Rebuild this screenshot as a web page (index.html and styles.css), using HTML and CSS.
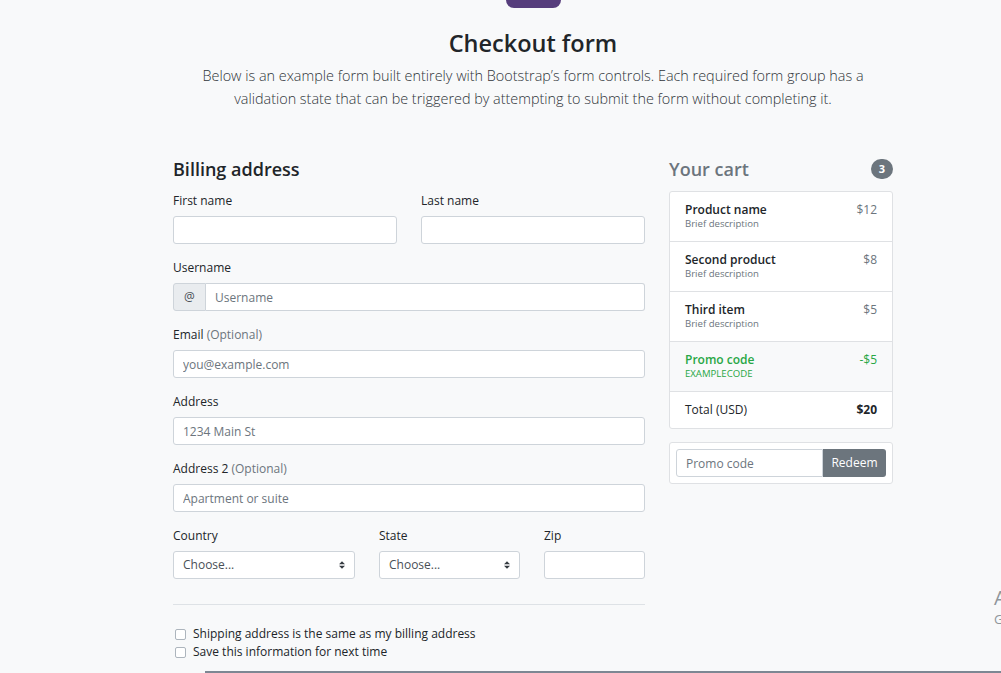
FILE: index.html
```html
<!DOCTYPE html>
<html lang="en">
<head>
<meta charset="utf-8">
<title>Checkout form</title>
<link rel="stylesheet" href="styles.css">
</head>
<body>
<div class="container">
  <header class="intro">
    <div class="logo"></div>
    <h2 class="title">Checkout form</h2>
    <p class="lead">Below is an example form built entirely with Bootstrap’s form controls. Each required form group has a validation state that can be triggered by attempting to submit the form without completing it.</p>
  </header>

  <div class="row">
    <main class="col-form">
      <h4 class="section-title">Billing address</h4>
      <div class="grid-2">
        <div class="group">
          <label class="label">First name</label>
          <input class="control" type="text">
        </div>
        <div class="group">
          <label class="label">Last name</label>
          <input class="control" type="text">
        </div>
      </div>
      <div class="group">
        <label class="label">Username</label>
        <div class="input-group">
          <span class="addon">@</span>
          <input class="control control-join" type="text" placeholder="Username">
        </div>
      </div>
      <div class="group">
        <label class="label">Email <span class="muted">(Optional)</span></label>
        <input class="control" type="text" placeholder="you@example.com">
      </div>
      <div class="group">
        <label class="label">Address</label>
        <input class="control" type="text" placeholder="1234 Main St">
      </div>
      <div class="group">
        <label class="label">Address 2 <span class="muted">(Optional)</span></label>
        <input class="control" type="text" placeholder="Apartment or suite">
      </div>
      <div class="grid-3">
        <div class="group">
          <label class="label">Country</label>
          <div class="select-wrap">
            <select class="control select"><option>Choose...</option></select>
            <svg class="arrows" width="6" height="8" viewBox="0 0 4 5"><path d="M2 0L0 2h4zm0 5L0 3h4z" fill="#343a40"/></svg>
          </div>
        </div>
        <div class="group">
          <label class="label">State</label>
          <div class="select-wrap">
            <select class="control select"><option>Choose...</option></select>
            <svg class="arrows" width="6" height="8" viewBox="0 0 4 5"><path d="M2 0L0 2h4zm0 5L0 3h4z" fill="#343a40"/></svg>
          </div>
        </div>
        <div class="group">
          <label class="label">Zip</label>
          <input class="control" type="text">
        </div>
      </div>
      <hr class="divider">
      <div class="check"><span class="box"></span><span>Shipping address is the same as my billing address</span></div>
      <div class="check"><span class="box"></span><span>Save this information for next time</span></div>
    </main>

    <aside class="col-cart">
      <h4 class="cart-title"><span class="muted">Your cart</span><span class="badge">3</span></h4>
      <ul class="list">
        <li class="item">
          <div><h6 class="item-name">Product name</h6><small class="item-desc">Brief description</small></div>
          <span class="price">$12</span>
        </li>
        <li class="item">
          <div><h6 class="item-name">Second product</h6><small class="item-desc">Brief description</small></div>
          <span class="price">$8</span>
        </li>
        <li class="item">
          <div><h6 class="item-name">Third item</h6><small class="item-desc">Brief description</small></div>
          <span class="price">$5</span>
        </li>
        <li class="item item-promo">
          <div><h6 class="item-name">Promo code</h6><small class="item-desc">EXAMPLECODE</small></div>
          <span class="price">-$5</span>
        </li>
        <li class="item item-total">
          <span>Total (USD)</span>
          <strong>$20</strong>
        </li>
      </ul>
      <div class="promo-card">
        <input class="control control-left" type="text" placeholder="Promo code">
        <button class="btn" type="button">Redeem</button>
      </div>
    </aside>
  </div>
</div>
<div class="watermark"><div class="wm1">Activate Windows</div><div class="wm2">Go to Settings to activate Windows.</div></div>
<div class="taskbar-edge"></div>
</body>
</html>
```

FILE: styles.css
```css
* { box-sizing: border-box; }
html, body { margin: 0; padding: 0; }
body {
  background: #f8f9fa;
  color: #212529;
  font-family: "Open Sans", "Noto Sans", sans-serif;
  font-size: 12px;
  line-height: 1.5;
  width: 1001px;
  height: 673px;
  overflow: hidden;
  position: relative;
}
.container { width: 744px; margin-left: 161px; }
.intro { text-align: center; display: flex; flex-direction: column; align-items: center; }
.logo { width: 55px; height: 8px; background: #563d7c; border-radius: 0 0 8px 8px; margin-left: 1px; }
.title { margin: 21px 0 6px; font-size: 23.5px; line-height: 29px; font-weight: 600; }
.lead { margin: 0; font-size: 14.4px; line-height: 23px; font-weight: 300; color: #2f3439; width: 680px; }

.row { display: flex; gap: 24px; margin-top: 48px; padding: 0 12px; }
.col-form { width: 472px; }
.col-cart { width: 224px; }

.section-title, .cart-title { margin: 0 0 10px; font-size: 18px; line-height: 22px; font-weight: 600; }
.cart-title { display: flex; justify-content: space-between; align-items: center; margin-bottom: 11px; }
.muted { color: #6c757d; font-weight: inherit; }
.badge { flex-shrink: 0; background: #6c757d; color: #fff; font-size: 11px; line-height: 20px; font-weight: 700; width: 22px; height: 20px; border-radius: 10px; text-align: center; }

.grid-2 { display: grid; grid-template-columns: 1fr 1fr; column-gap: 24px; }
.grid-3 { display: grid; grid-template-columns: 182px 141px 1fr; column-gap: 24px; }
.group { margin-bottom: 13px; }
.label { display: block; line-height: 22px; margin-bottom: 4px; }

.control {
  display: block; width: 100%; height: 28px;
  border: 1px solid #ced4da; border-radius: 3px; background: #fff;
  padding: 0 9px; font: inherit; font-size: 12px; color: #495057; outline: none;
}
.control::placeholder { color: #6c757d; }
.input-group { display: flex; }
.addon { flex-shrink: 0; width: 33px; height: 28px; background: #e9ecef; border: 1px solid #ced4da; border-radius: 3px 0 0 3px; display: flex; align-items: center; justify-content: center; color: #495057; }
.control-join { border-left: 0; border-radius: 0 3px 3px 0; flex: 1; width: 0; min-width: 0; }
.select-wrap { position: relative; }
.select { appearance: none; -webkit-appearance: none; color: #495057; }
.arrows { position: absolute; right: 10px; top: 10px; }

.divider { border: 0; border-top: 1px solid #dee2e6; margin: 12px 0 20px; }
.check { display: flex; align-items: center; line-height: 18px; }
.box { flex-shrink: 0; width: 11px; height: 11px; border: 1px solid #adb5bd; border-radius: 2px; background: #fff; margin: 0 7px 0 2px; }

.list { list-style: none; margin: 0; padding: 0; background: #fff; border: 1px solid #dfe1e4; border-radius: 3px; }
.item { display: flex; justify-content: space-between; padding: 10px 15px; border-top: 1px solid #dfe1e4; }
.item:first-child { border-top: 0; }
.item-name { margin: 0; font-size: 12px; line-height: 15px; font-weight: 600; }
.item-desc { display: block; font-size: 9.6px; line-height: 14px; color: #6c757d; }
.price { color: #6c757d; line-height: 15px; }
.item-promo { background: #f8f9fa; }
.item-promo .item-name, .item-promo .item-desc, .item-promo .price { color: #28a745; }
.item-total { padding: 9px 15px; line-height: 18px; }
.item-total strong { font-weight: 700; }

.promo-card { margin-top: 13px; background: #fff; border: 1px solid #dfe1e4; border-radius: 3px; padding: 6px; display: flex; }
.control-left { border-radius: 3px 0 0 3px; flex: 1; width: 0; min-width: 0; }
.btn { flex-shrink: 0; width: 63px; height: 28px; border: 0; background: #6c757d; color: #fff; font: inherit; font-size: 12px; border-radius: 0 3px 3px 0; }

.watermark { position: absolute; left: 994px; top: 586px; white-space: nowrap; color: #8f959b; }
.wm1 { font-size: 20px; line-height: 24px; }
.wm2 { font-size: 13px; line-height: 18px; }
.taskbar-edge { position: absolute; left: 205px; right: 0; bottom: 0; height: 2px; background: #7d8793; }
```
